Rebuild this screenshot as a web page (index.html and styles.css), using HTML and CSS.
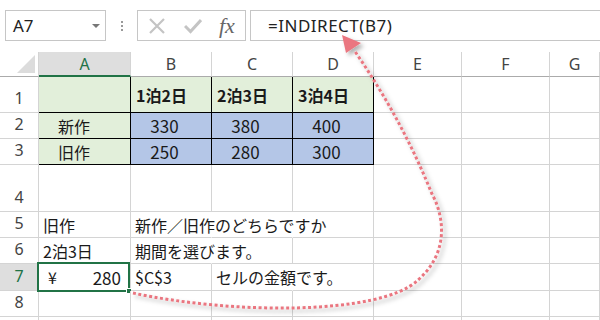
FILE: index.html
```html
<!DOCTYPE html>
<html lang="ja">
<head>
<meta charset="utf-8">
<link rel="stylesheet" href="styles.css">
</head>
<body>
<div class="app">
  <div class="toolbar">
    <div class="namebox"><span class="name">A7</span><span class="caret"></span></div>
    <div class="grip"><i></i><i></i><i></i></div>
    <div class="fbtns">
      <svg class="ico" width="18" height="18" viewBox="0 0 18 18"><path d="M2 2 L16 16 M16 2 L2 16" stroke="#c4c4c4" stroke-width="2.2" fill="none"/></svg>
      <svg class="ico" width="18" height="18" viewBox="0 0 18 18"><path d="M1 9 L6.5 14.5 L17 3" stroke="#c4c4c4" stroke-width="3" fill="none"/></svg>
      <span class="fx">fx</span>
    </div>
    <div class="formula">=INDIRECT(B7)</div>
  </div>

  <div class="sheet">
    <div class="corner"><span class="tri"></span></div>
    <div class="ch sel">A</div><div class="ch">B</div><div class="ch">C</div><div class="ch">D</div><div class="ch">E</div><div class="ch">F</div><div class="ch">G</div>

    <div class="rh">1</div>
    <div class="c g t"></div><div class="c g t bold">1泊2日</div><div class="c g t bold">2泊3日</div><div class="c g t bold">3泊4日</div><div class="c"></div><div class="c"></div><div class="c"></div>

    <div class="rh">2</div>
    <div class="c g t ind">新作</div><div class="c b t num">330</div><div class="c b t num">380</div><div class="c b t num">400</div><div class="c"></div><div class="c"></div><div class="c"></div>

    <div class="rh">3</div>
    <div class="c g t ind">旧作</div><div class="c b t num">250</div><div class="c b t num">280</div><div class="c b t num">300</div><div class="c"></div><div class="c"></div><div class="c"></div>

    <div class="rh">4</div>
    <div class="c"></div><div class="c"></div><div class="c"></div><div class="c"></div><div class="c"></div><div class="c"></div><div class="c"></div>

    <div class="rh">5</div>
    <div class="c">旧作</div><div class="c nr"><span class="ov">新作／旧作のどちらですか</span></div><div class="c nr"></div><div class="c"></div><div class="c"></div><div class="c"></div><div class="c"></div>

    <div class="rh">6</div>
    <div class="c">2泊3日</div><div class="c nr"><span class="ov">期間を選びます。</span></div><div class="c"></div><div class="c"></div><div class="c"></div><div class="c"></div><div class="c"></div>

    <div class="rh rsel">7</div>
    <div class="c cur"><span>¥</span><span class="n17">280</span><div class="selbox"><span class="handle"></span></div></div><div class="c">$C$3</div><div class="c nr"><span class="ov">セルの金額です。</span></div><div class="c"></div><div class="c"></div><div class="c"></div><div class="c"></div>

    <div class="rh">8</div>
    <div class="c"></div><div class="c"></div><div class="c"></div><div class="c"></div><div class="c"></div><div class="c"></div><div class="c"></div>

    <div class="rh"></div>
    <div class="c"></div><div class="c"></div><div class="c"></div><div class="c"></div><div class="c"></div><div class="c"></div><div class="c"></div>
  </div>

  <svg class="arrow" width="600" height="320" viewBox="0 0 600 320">
    <defs>
      <filter id="sh" x="-20%" y="-20%" width="140%" height="140%">
        <feDropShadow dx="3" dy="3" stdDeviation="2" flood-color="#000" flood-opacity="0.3"/>
      </filter>
    </defs>
    <g filter="url(#sh)">
      <path d="M133 293 C 230 314 380 316 418 280 C 452 250 442 212 432 194 C 410 140 385 95 354 50" fill="none" stroke="#ea7680" stroke-width="3" stroke-dasharray="3 2.5"/>
      <polygon points="342,35 346,53 361,43" fill="#ea7680"/>
    </g>
  </svg>
</div>
</body>
</html>
```

FILE: styles.css
```css
* { box-sizing: border-box; }
html, body { margin: 0; padding: 0; background: #fff; }
body { font-family: "Noto Sans CJK JP", "Noto Sans", sans-serif; color: #1a1a1a; }

.app { position: relative; width: 600px; height: 320px; overflow: hidden; }

.toolbar {
  height: 52px;
  display: flex;
  align-items: flex-start;
  padding-top: 10px;
}
.namebox {
  margin-left: 5px;
  width: 101px;
  height: 31px;
  border: 1px solid #c6c6c6;
  display: flex;
  align-items: center;
  justify-content: space-between;
  padding: 0 5px 0 7px;
}
.name { font-family: "Noto Sans", sans-serif; font-size: 17px; color: #222; }
.caret {
  width: 0; height: 0;
  border-left: 4px solid transparent;
  border-right: 4px solid transparent;
  border-top: 4px solid #777;
}
.grip {
  width: 31px;
  height: 31px;
  display: flex;
  flex-direction: column;
  align-items: center;
  justify-content: center;
  gap: 2px;
}
.grip i { display: block; width: 2px; height: 2px; background: #999; }
.fbtns {
  width: 109px;
  height: 31px;
  border: 1px solid #c6c6c6;
  display: flex;
  align-items: center;
  padding-left: 10px;
  gap: 18px;
}
.fx {
  font-family: "Liberation Serif", serif;
  font-style: italic;
  font-size: 22px;
  color: #666;
  line-height: 1;
  margin-left: -1px;
}
.formula {
  flex: 1;
  margin-left: 4px;
  height: 31px;
  border: 1px solid #c6c6c6;
  border-right: none;
  display: flex;
  align-items: center;
  padding-left: 17px;
  font-family: "Noto Sans", sans-serif;
  font-size: 17px;
  letter-spacing: 0.5px;
  color: #222;
}

.sheet {
  display: grid;
  grid-template-columns: 39px 92px 81px 81px 81px 88px 88px 50px;
  grid-template-rows: 25px 36px 26px 26px 47px 26px 26px 27px 26px 30px;
}
.corner {
  border-right: 1px solid #d4d4d4;
  border-bottom: 1px solid #ababab;
  position: relative;
}
.tri {
  position: absolute;
  right: 3px;
  bottom: 3px;
  width: 0; height: 0;
  border-left: 18px solid transparent;
  border-bottom: 18px solid #dcdcdc;
}
.ch {
  border-right: 1px solid #d4d4d4;
  border-bottom: 1px solid #ababab;
  display: flex;
  align-items: center;
  justify-content: center;
  font-family: "Noto Sans", sans-serif;
  font-size: 16px;
  color: #444;
}
.ch.sel {
  background: #dedede;
  color: #217346;
  border-bottom: 2px solid #217346;
}
.rh {
  border-right: 1px solid #d4d4d4;
  border-bottom: 1px solid #d4d4d4;
  display: flex;
  align-items: flex-end;
  justify-content: center;
  padding-bottom: 3px;
  font-family: "Noto Sans", sans-serif;
  font-size: 16px;
  color: #444;
}
.rh.rsel { background: #dedede; color: #217346; }

.c {
  border-right: 1px solid #d4d4d4;
  border-bottom: 1px solid #d4d4d4;
  display: flex;
  align-items: center;
  padding-left: 4px;
  font-size: 16px;
  white-space: nowrap;
  position: relative;
  min-width: 0;
}
.c.nr { border-right-color: transparent; }
.ov { overflow: visible; }
.g { background: #e2efda; }
.b { background: #b4c6e7; }
.t { border-right-color: #000; border-bottom-color: #000; }
.bold { font-weight: bold; padding-left: 5px; }
.ind { padding-left: 19px; }
.num { justify-content: center; padding-left: 0; padding-right: 13px; font-size: 17px; }
.n17 { font-size: 17px; }
.cur { justify-content: space-between; padding: 0 9px 0 9px; }

.selbox {
  position: absolute;
  left: -2px;
  top: -2px;
  width: 93px;
  height: 30px;
  border: 2px solid #217346;
}
.handle {
  position: absolute;
  right: -4px;
  bottom: -4px;
  width: 6px;
  height: 6px;
  background: #217346;
  border: 1px solid #fff;
}

.arrow {
  position: absolute;
  left: 0;
  top: 0;
  pointer-events: none;
}
```
